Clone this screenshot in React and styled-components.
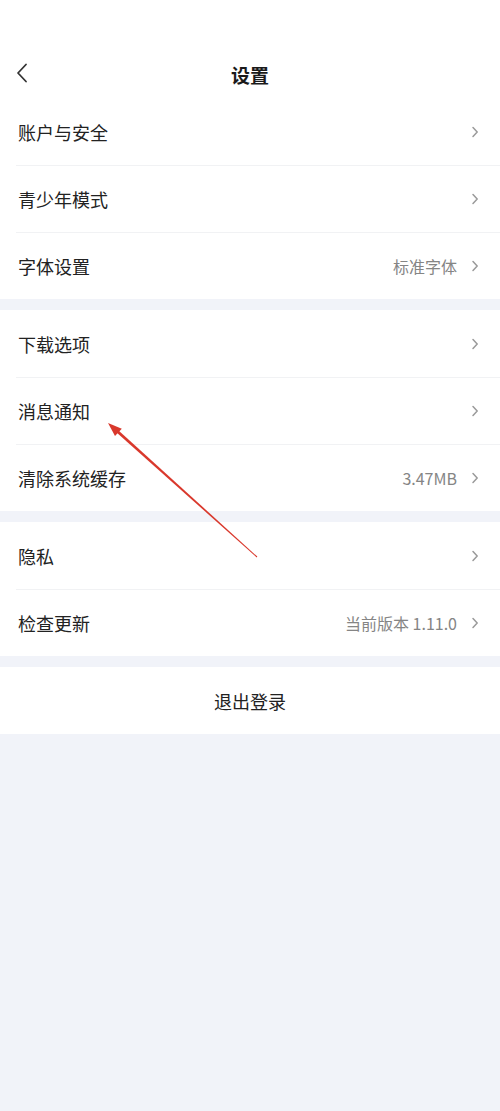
import React from 'react';
import styled, { createGlobalStyle } from 'styled-components';

const GlobalStyle = createGlobalStyle`
    body{
        margin: 0;
        background: #f1f3f9;
        font-family: "Noto Sans CJK SC", "Noto Sans", sans-serif;
        color: #222;
    }
`;

const Page = styled.div`
    position: relative;
    min-height: 1111px;
    background: #f1f3f9;
`;

const Header = styled.header`
    background: #fff;
    padding-top: 50px;
`;

const NavBar = styled.div`
    height: 48px;
    display: grid;
    grid-template-columns: 50px 1fr 50px;
    align-items: center;
    h1{
        margin: 0;
        text-align: center;
        font-size: 19px;
        font-weight: 700;
        color: #1a1a1a;
    }
`;

const BackBtn = styled.div`
    display: flex;
    align-items: center;
    padding-left: 16px;
    margin-top: -2px;
`;

const Group = styled.section`
    background: #fff;
    margin-bottom: 11px;
`;

const Row = styled.div`
    height: 67px;
    box-sizing: border-box;
    margin-left: 16px;
    padding: 0 21px 0 2px;
    display: flex;
    align-items: center;
    gap: 8px;
    & + &{
        border-top: 1px solid #f1f2f4;
    }
`;

const Label = styled.span`
    flex: 1;
    font-size: 18px;
    color: #222;
`;

const Value = styled.span`
    font-size: 16px;
    color: #858585;
    margin-right: 6px;
`;

const Logout = styled.div`
    background: #fff;
    height: 67px;
    display: flex;
    align-items: center;
    justify-content: center;
    font-size: 18px;
    color: #222;
`;

const Overlay = styled.svg`
    position: absolute;
    top: 0;
    left: 0;
    width: 500px;
    height: 1111px;
    pointer-events: none;
`;

const Chevron = () => (
    <svg width="8" height="12" viewBox="0 0 8 12">
        <path d="M2 1.5 L6.2 6 L2 10.5" fill="none" stroke="#9a9a9a" strokeWidth="1.5" strokeLinecap="round" strokeLinejoin="round" />
    </svg>
);

const groups = [
    [
        { label: '账户与安全' },
        { label: '青少年模式' },
        { label: '字体设置', value: '标准字体' },
    ],
    [
        { label: '下载选项' },
        { label: '消息通知' },
        { label: '清除系统缓存', value: '3.47MB' },
    ],
    [
        { label: '隐私' },
        { label: '检查更新', value: '当前版本 1.11.0' },
    ],
];

export default function App(){
    return (
        <Page>
            <GlobalStyle />
            <Header>
                <NavBar>
                    <BackBtn>
                        <svg width="12" height="20" viewBox="0 0 12 20">
                            <path d="M10 1.5 L2 10 L10 18.5" fill="none" stroke="#333" strokeWidth="1.8" strokeLinecap="round" strokeLinejoin="round" />
                        </svg>
                    </BackBtn>
                    <h1>设置</h1>
                    <span />
                </NavBar>
            </Header>
            {groups.map((items, i) => (
                <Group key={i}>
                    {items.map(item => (
                        <Row key={item.label}>
                            <Label>{item.label}</Label>
                            {item.value && <Value>{item.value}</Value>}
                            <Chevron />
                        </Row>
                    ))}
                </Group>
            ))}
            <Logout>退出登录</Logout>
            {/* red annotation arrow pointing at 消息通知 */}
            <Overlay viewBox="0 0 500 1111">
                <polygon points="257.3,556.6 256.7,557.4 116,432.1 118,429.9" fill="#d9382c" />
                <polygon points="108,423 121.8,428.7 115,436.1" fill="#d9382c" />
            </Overlay>
        </Page>
    );
}
